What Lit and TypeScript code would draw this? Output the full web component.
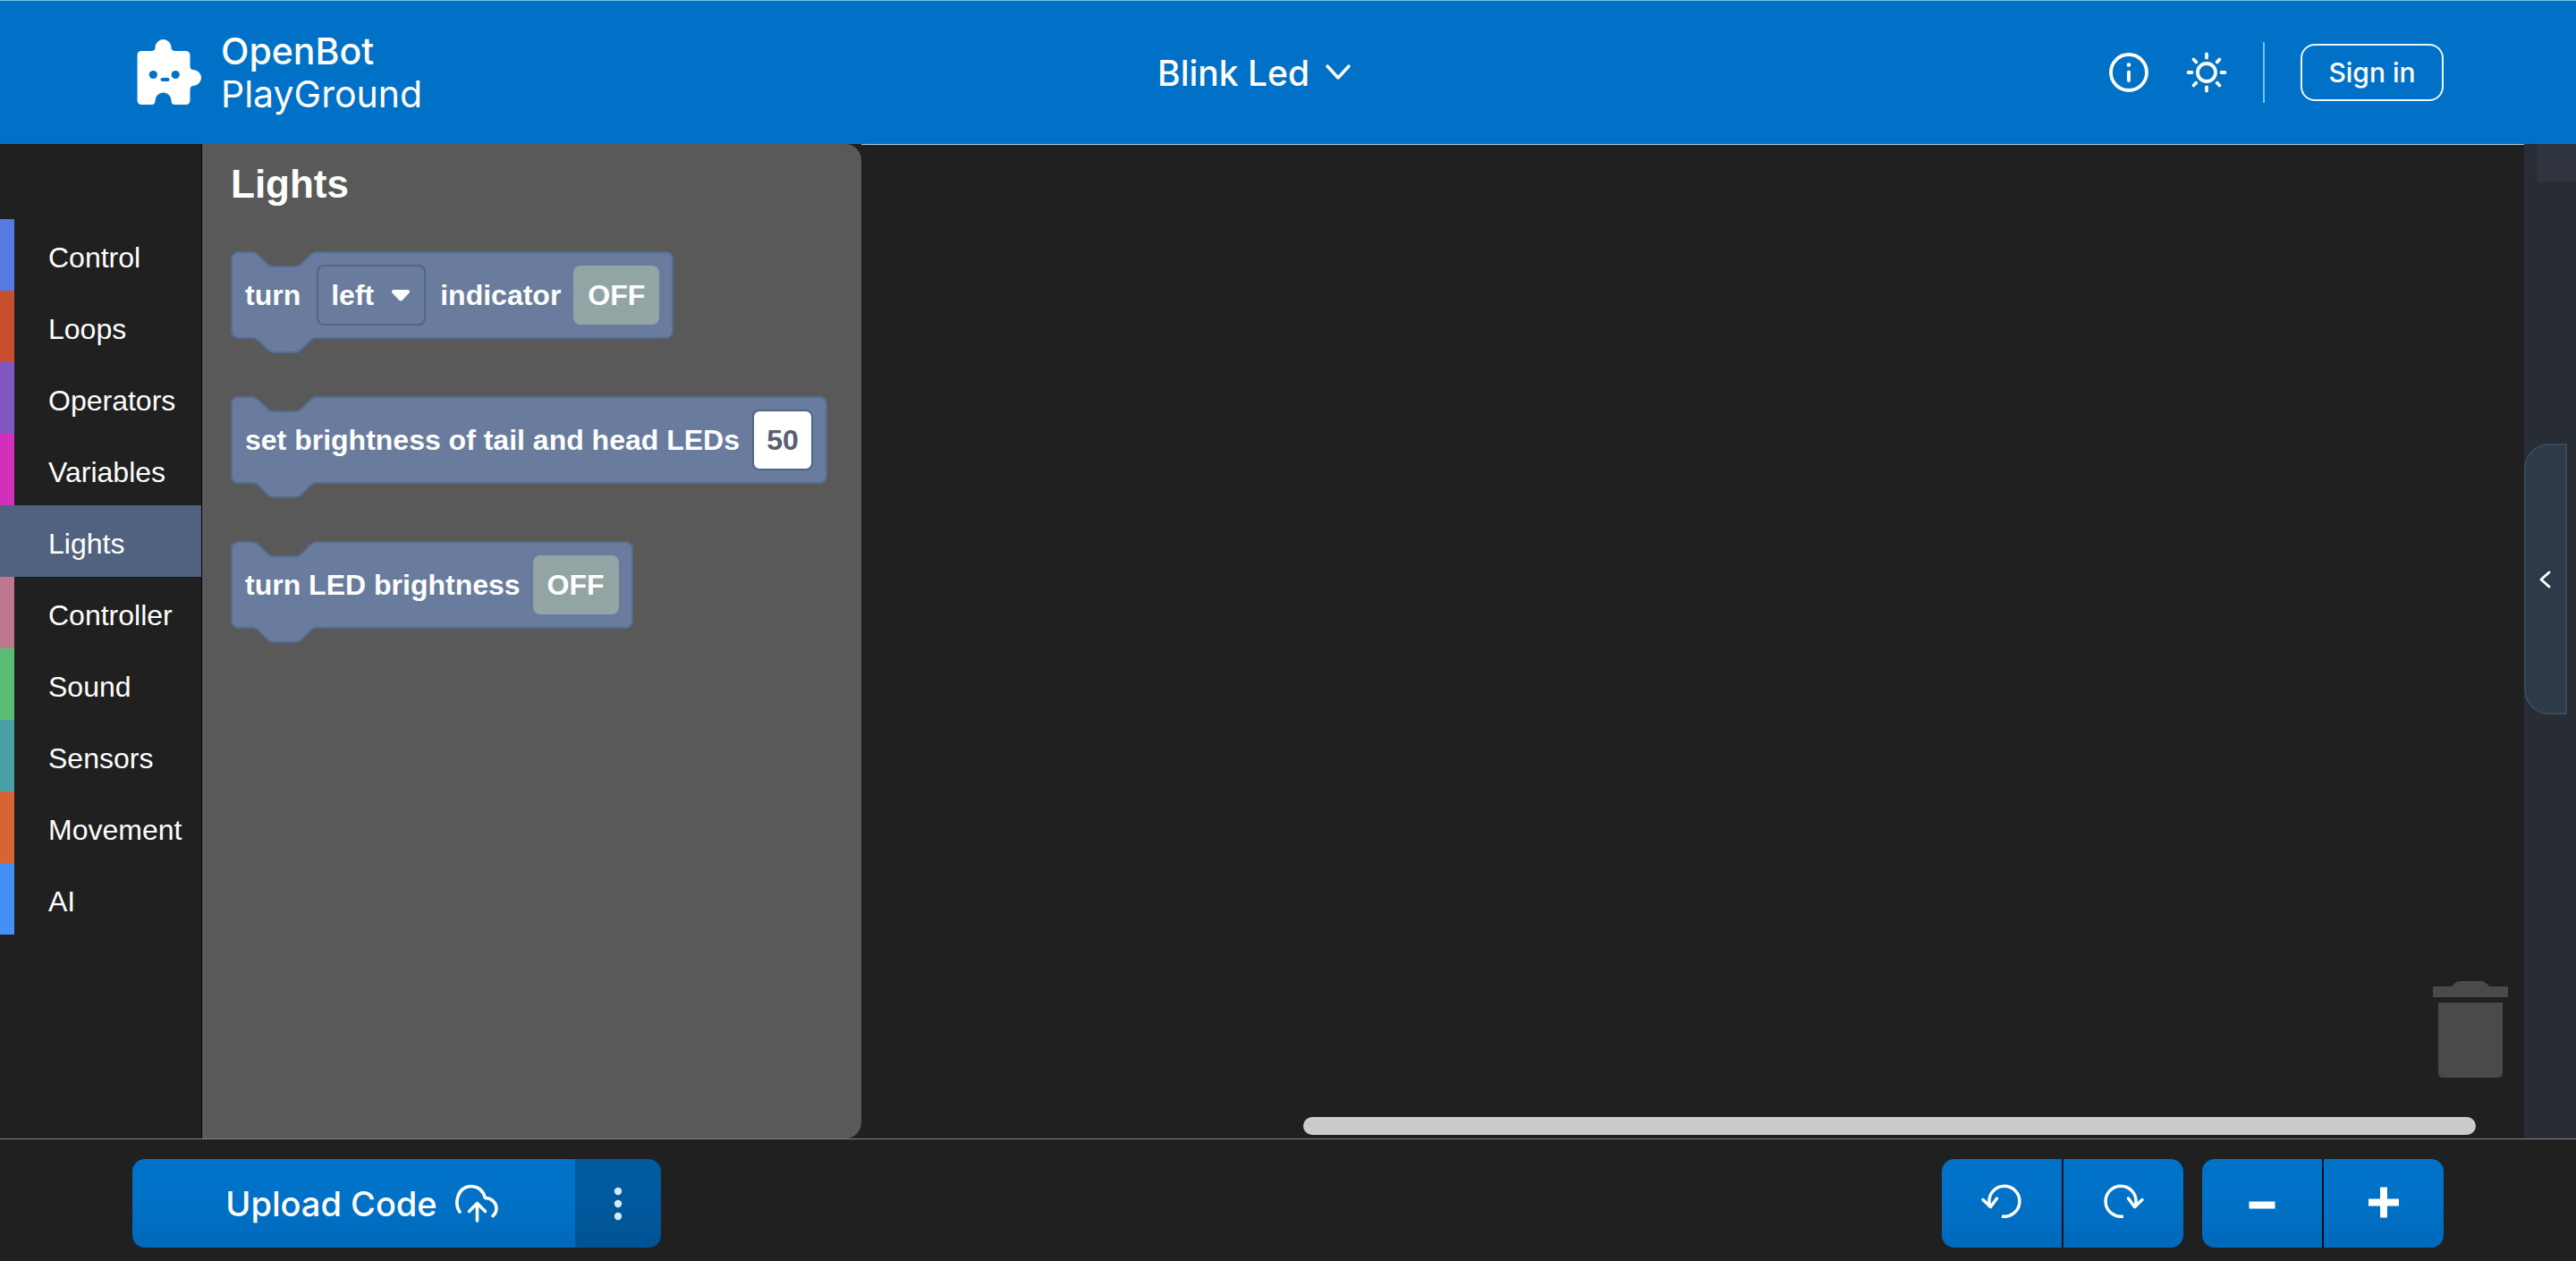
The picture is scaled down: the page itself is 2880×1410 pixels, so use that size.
import { LitElement, html, css, svg } from "lit";
import { customElement, property, state } from "lit/decorators.js";
import { styleMap } from "lit/directives/style-map.js";
import { classMap } from "lit/directives/class-map.js";

interface Category {
  name: string;
  color: string;
}

const CATEGORIES: Category[] = [
  { name: "Control", color: "#5779e4" },
  { name: "Loops", color: "#c64f2e" },
  { name: "Operators", color: "#8257c4" },
  { name: "Variables", color: "#d22fba" },
  { name: "Lights", color: "#50627f" },
  { name: "Controller", color: "#bd788f" },
  { name: "Sound", color: "#5bbc75" },
  { name: "Sensors", color: "#49a1a5" },
  { name: "Movement", color: "#d66435" },
  { name: "AI", color: "#4590f7" },
];

const NOTCH = "c4,0 6,2 8,4 l8,8 c2,2 4,4 8,4 h24 c4,0 6,-2 8,-4 l8,-8 c2,-2 4,-4 8,-4";
const UNDO_ARC = "M24 38 A17 17 0 1 0 10 23 L10.5 28";
const UNDO_HEAD = "M3 19.5 L11.5 27.5 L18.5 18";

/* A statement block with a notch on top and a matching tab below. */
@customElement("code-block")
class CodeBlock extends LitElement {
  static styles = css`
    :host {
      display: block;
      width: max-content;
    }
    .block {
      position: relative;
      display: flex;
      align-items: center;
      gap: 14px;
      box-sizing: border-box;
      height: 98px;
      padding: 0 14px;
      border: 2px solid #566b8d;
      border-radius: 8px;
      background: #697c9e;
    }
    .notch,
    .tab {
      position: absolute;
      left: 22px;
      width: 72px;
      height: 18px;
      overflow: visible;
    }
    .notch {
      top: -2px;
    }
    .tab {
      top: 94px;
    }
  `;

  render() {
    return html`
      <div class="block">
        <svg class="notch" viewBox="0 0 72 18" aria-hidden="true">
          <path d="M0,-1 V1 ${NOTCH} V-1 z" fill="#595959" />
          <path d="M0,1 ${NOTCH}" fill="none" stroke="#566b8d" stroke-width="2" />
        </svg>
        <slot></slot>
        <svg class="tab" viewBox="0 0 72 18" aria-hidden="true">
          <path d="M0,-2 V1 ${NOTCH} V-2 z" fill="#697c9e" />
          <path d="M0,1 ${NOTCH}" fill="none" stroke="#566b8d" stroke-width="2" />
        </svg>
      </div>
    `;
  }
}

@customElement("toggle-field")
class ToggleField extends LitElement {
  @property() label = "";
  @state() private on = false;

  static styles = css`
    .toggle {
      display: block;
      height: 66px;
      padding: 0 16px;
      border: 0;
      border-radius: 8px;
      background: #92a5a4;
      color: #fff;
      font: bold 32px "Liberation Sans", Arial, sans-serif;
      cursor: pointer;
    }
  `;

  render() {
    return html`<button
      class="toggle"
      aria-label=${this.label}
      aria-pressed=${this.on ? "true" : "false"}
      @click=${() => (this.on = !this.on)}
    >${this.on ? "ON" : "OFF"}</button>`;
  }
}

@customElement("app-root")
class AppRoot extends LitElement {
  @state() private category = "Lights";

  static styles = css`
    :host {
      display: flex;
      flex-direction: column;
      min-height: 100vh;
      background: #202020;
      color: #fff;
      font-family: Inter, "Liberation Sans", sans-serif;
    }
    button {
      margin: 0;
      padding: 0;
      border: 0;
      background: none;
      color: inherit;
      font: inherit;
      cursor: pointer;
    }
    svg {
      display: block;
      flex: none;
    }

    .header {
      display: flex;
      align-items: center;
      justify-content: space-between;
      box-sizing: border-box;
      height: 161px;
      padding: 0 148px 0 153px;
      border-top: 1px solid #76c3ec;
      background: #0071c6;
    }
    .brand {
      display: flex;
      align-items: center;
      gap: 22px;
      color: inherit;
      text-decoration: none;
      font-size: 41px;
      line-height: 48px;
    }
    .brand-name {
      display: flex;
      flex-direction: column;
    }
    .brand-strong {
      font-weight: 500;
    }
    .project {
      display: flex;
      align-items: center;
      gap: 16px;
      padding-right: 16px;
      font-size: 39px;
      font-weight: 500;
    }
    .actions {
      display: flex;
      align-items: center;
    }
    .icon-button {
      display: flex;
      justify-content: center;
      width: 60px;
      margin-right: 27px;
    }
    .divider {
      width: 2px;
      height: 68px;
      margin: 0 40px 0 6px;
      background: #6cc6f5;
    }
    .sign-in {
      box-sizing: border-box;
      width: 160px;
      height: 64px;
      border: 2px solid #e8f6ff;
      border-radius: 16px;
      font-size: 30px;
      font-weight: 500;
    }

    .main {
      display: flex;
      flex: 1;
    }
    .toolbox {
      display: flex;
      flex-direction: column;
      box-sizing: border-box;
      width: 226px;
      padding-top: 84px;
      border-right: 1px solid #000;
      font: 32px "Liberation Sans", Arial, sans-serif;
    }
    .category {
      box-sizing: border-box;
      height: 80px;
      padding: 6px 0 0 38px;
      border-left: 16px solid;
      text-align: left;
    }
    .flyout {
      box-sizing: border-box;
      display: flex;
      flex-direction: column;
      gap: 64px;
      width: 737px;
      padding: 20px 32px;
      border-radius: 0 18px 18px 0;
      background: #595959;
      font: bold 32px "Liberation Sans", Arial, sans-serif;
    }
    .flyout-title {
      margin: 0 0 -14px;
      font-size: 44px;
      line-height: 50px;
    }
    .dropdown {
      position: relative;
      margin: 0 2px 0 4px;
    }
    .select {
      display: block;
      box-sizing: border-box;
      width: 122px;
      height: 68px;
      padding: 0 40px 0 14px;
      border: 2px solid #50658a;
      border-radius: 8px;
      appearance: none;
      background: transparent;
      color: #fff;
      font: inherit;
    }
    .caret {
      position: absolute;
      right: 17px;
      top: 27px;
      pointer-events: none;
    }
    .number {
      box-sizing: border-box;
      width: 68px;
      height: 68px;
      padding: 0;
      border: 2px solid #50658a;
      border-radius: 8px;
      background: #fff;
      color: #575e75;
      font: inherit;
      text-align: center;
    }
    .workspace {
      display: flex;
      flex: 1;
      flex-direction: column;
      align-items: flex-end;
      justify-content: flex-end;
      border-top: 1px solid #b4c8d8;
    }
    .trash {
      margin: 0 18px 44px 0;
    }
    .scrollbar {
      width: 1311px;
      height: 20px;
      margin: 0 54px 4px 0;
      border-radius: 10px;
      background: #cbcbcb;
    }
    .side {
      display: flex;
      flex-direction: column;
      width: 58px;
      background: #282c35;
    }
    .side-head {
      height: 42px;
      margin-left: 15px;
      background: #30343e;
    }
    .side-tab {
      display: flex;
      align-items: center;
      justify-content: center;
      box-sizing: border-box;
      width: 48px;
      height: 303px;
      margin-top: 293px;
      border: 2px solid #384958;
      border-radius: 28px 0 0 28px;
      background: #2f3a49;
    }

    .footer {
      display: flex;
      align-items: center;
      gap: 21px;
      padding: 22px 148px 15px;
      border-top: 1px solid #858585;
    }
    .group {
      display: flex;
      gap: 2px;
      height: 99px;
      overflow: hidden;
      border-radius: 14px;
      background: #00101f;
    }
    .upload-group {
      gap: 0;
      margin-right: auto;
    }
    .group-button {
      display: flex;
      align-items: center;
      justify-content: center;
      width: 134px;
      background: linear-gradient(#0072c8 40%, #0069ba);
    }
    .upload {
      gap: 20px;
      width: 495px;
      padding-left: 18px;
      box-sizing: border-box;
      font-size: 38px;
      font-weight: 500;
    }
    .more {
      width: 96px;
      background: linear-gradient(#005a9e 40%, #005394);
    }
  `;

  private renderLogo() {
    return svg`
      <path fill="#fff" d="M5.5 13 H16 Q20.5 13 20.5 9 A9 9 0 0 1 38.5 9 Q38.5 13 43 13 H54.5 Q59.5 13 59.5 18 V30 Q59.5 34 63 34 A9 9 0 0 1 63 52 Q59.5 52 59.5 57 V68 Q59.5 73 54.5 73 H42.5 Q38.5 73 38.5 68.5 A9 9 0 0 0 20.5 68.5 Q20.5 73 16.5 73 H5.5 Q0.5 73 0.5 68 V18 Q0.5 13 5.5 13 Z" />
      <circle cx="18.3" cy="39.5" r="4.6" fill="#0071c6" />
      <circle cx="43.2" cy="39.5" r="4.6" fill="#0071c6" />
      <rect x="26.5" y="43" width="10" height="4" rx="2" fill="#0071c6" />
    `;
  }

  private renderSunRays() {
    return [0, 45, 90, 135, 180, 225, 270, 315].map(
      (a) => svg`<path d="M24 3.5 V7.5" transform="rotate(${a} 24 24)" />`
    );
  }

  render() {
    return html`
      <header class="header">
        <a class="brand" href="#">
          <svg width="72" height="74" viewBox="0 0 72 74" aria-hidden="true">${this.renderLogo()}</svg>
          <span class="brand-name"><span class="brand-strong">OpenBot</span><span>PlayGround</span></span>
        </a>
        <button class="project">
          Blink Led
          <svg width="32" height="24" viewBox="0 0 32 24" fill="none" stroke="#fff" stroke-width="3.5" stroke-linecap="round" stroke-linejoin="round" aria-hidden="true">
            <path d="M4 5 L16 18 L28 5" />
          </svg>
        </button>
        <div class="actions">
          <button class="icon-button" aria-label="Information">
            <svg width="48" height="48" viewBox="0 0 48 48" fill="none" stroke="#fff" stroke-width="3.8" stroke-linecap="round" aria-hidden="true">
              <circle cx="24" cy="24" r="20" />
              <path d="M24 23.5 V33" />
              <circle cx="24" cy="15.5" r="2.3" fill="#fff" stroke="none" />
            </svg>
          </button>
          <button class="icon-button" aria-label="Theme">
            <svg width="48" height="48" viewBox="0 0 48 48" fill="none" stroke="#fff" stroke-width="3.8" stroke-linecap="round" aria-hidden="true">
              <circle cx="24" cy="24" r="10" />
              ${this.renderSunRays()}
            </svg>
          </button>
          <span class="divider"></span>
          <button class="sign-in">Sign in</button>
        </div>
      </header>

      <main class="main">
        <nav class="toolbox" aria-label="Block categories">
          ${CATEGORIES.map((c) => {
            const active = c.name === this.category;
            return html`<button
              class=${classMap({ category: true, active })}
              style=${styleMap({ borderColor: c.color, background: active ? c.color : "none" })}
              @click=${() => (this.category = c.name)}
            >${c.name}</button>`;
          })}
        </nav>
        <section class="flyout">
          <h2 class="flyout-title">Lights</h2>
          <code-block>
            <span>turn</span>
            <span class="dropdown">
              <select class="select" aria-label="Indicator side">
                <option>left</option>
                <option>right</option>
              </select>
              <svg class="caret" width="22" height="16" viewBox="0 0 22 16" aria-hidden="true">
                <path fill="#fff" d="M3 1 H19 Q22 1.5 20.5 4.5 L13 12.5 Q11 14.5 9 12.5 L1.5 4.5 Q0 1.5 3 1 Z" />
              </svg>
            </span>
            <span>indicator</span>
            <toggle-field label="Indicator state"></toggle-field>
          </code-block>
          <code-block>
            <label for="brightness">set brightness of tail and head LEDs</label>
            <input class="number" id="brightness" type="text" inputmode="numeric" value="50" />
          </code-block>
          <code-block>
            <span>turn LED brightness</span>
            <toggle-field label="LED brightness state"></toggle-field>
          </code-block>
        </section>
        <section class="workspace" aria-label="Workspace">
          <svg class="trash" width="84" height="108" viewBox="0 0 84 108" fill="#4a4a4a" role="img" aria-label="Trash">
            <path d="M0 6 H21 L25 2 Q27 0 30 0 H54 Q57 0 59 2 L63 6 H84 V18 H0 Z" />
            <path d="M6 24 H78 V102 Q78 108 72 108 H12 Q6 108 6 102 Z" />
          </svg>
          <div class="scrollbar"></div>
        </section>
        <aside class="side">
          <div class="side-head"></div>
          <button class="side-tab" aria-label="Open panel">
            <svg width="16" height="22" viewBox="0 0 16 22" fill="none" stroke="#fff" stroke-width="3" stroke-linecap="round" stroke-linejoin="round" aria-hidden="true">
              <path d="M12 3 L3 11 L12 19" />
            </svg>
          </button>
        </aside>
      </main>

      <footer class="footer">
        <div class="group upload-group">
          <button class="group-button upload">
            Upload Code
            <svg width="48" height="48" viewBox="0 0 48 48" fill="none" stroke="#fff" stroke-width="3.6" stroke-linecap="round" stroke-linejoin="round" aria-hidden="true">
              <path d="M5 33 C1.5 28 1.5 21 2.8 16.5 C4.8 8.5 11 4.5 17.5 4.5 C25 4.5 31 9 33.5 17.5 C40.5 17.5 46 23 46 29 C46 33 44.5 35.5 42 37.500" />
              <path d="M24.5 43 V24 M15.500 32.500 L24.500 23.500 L33.500 32.500" />
            </svg>
          </button>
          <button class="group-button more" aria-label="More upload options">
            <svg width="10" height="40" viewBox="0 0 10 40" fill="#d5eaf9" aria-hidden="true">
              <circle cx="5" cy="6" r="4.2" />
              <circle cx="5" cy="20" r="4.2" />
              <circle cx="5" cy="34" r="4.2" />
            </svg>
          </button>
        </div>
        <div class="group">
          <button class="group-button" aria-label="Undo">
            <svg width="48" height="48" viewBox="0 0 48 48" fill="none" stroke="#fff" stroke-width="3.5" stroke-linejoin="round" aria-hidden="true">
              <path d=${UNDO_ARC} />
              <path d=${UNDO_HEAD} stroke-linecap="round" />
            </svg>
          </button>
          <button class="group-button" aria-label="Redo">
            <svg width="48" height="48" viewBox="0 0 48 48" fill="none" stroke="#fff" stroke-width="3.5" stroke-linejoin="round" aria-hidden="true">
              <g transform="translate(48 0) scale(-1 1)">
                <path d=${UNDO_ARC} />
                <path d=${UNDO_HEAD} stroke-linecap="round" />
              </g>
            </svg>
          </button>
        </div>
        <div class="group">
          <button class="group-button" aria-label="Zoom out">
            <svg width="48" height="48" viewBox="0 0 48 48" fill="#fff" aria-hidden="true">
              <rect x="9.5" y="21.5" width="29" height="8" />
            </svg>
          </button>
          <button class="group-button" aria-label="Zoom in">
            <svg width="48" height="48" viewBox="0 0 48 48" fill="#fff" aria-hidden="true">
              <path d="M20 5.5 H28 V18.5 H41 V26.5 H28 V39.5 H20 V26.5 H7 V18.5 H20 Z" />
            </svg>
          </button>
        </div>
      </footer>
    `;
  }
}
